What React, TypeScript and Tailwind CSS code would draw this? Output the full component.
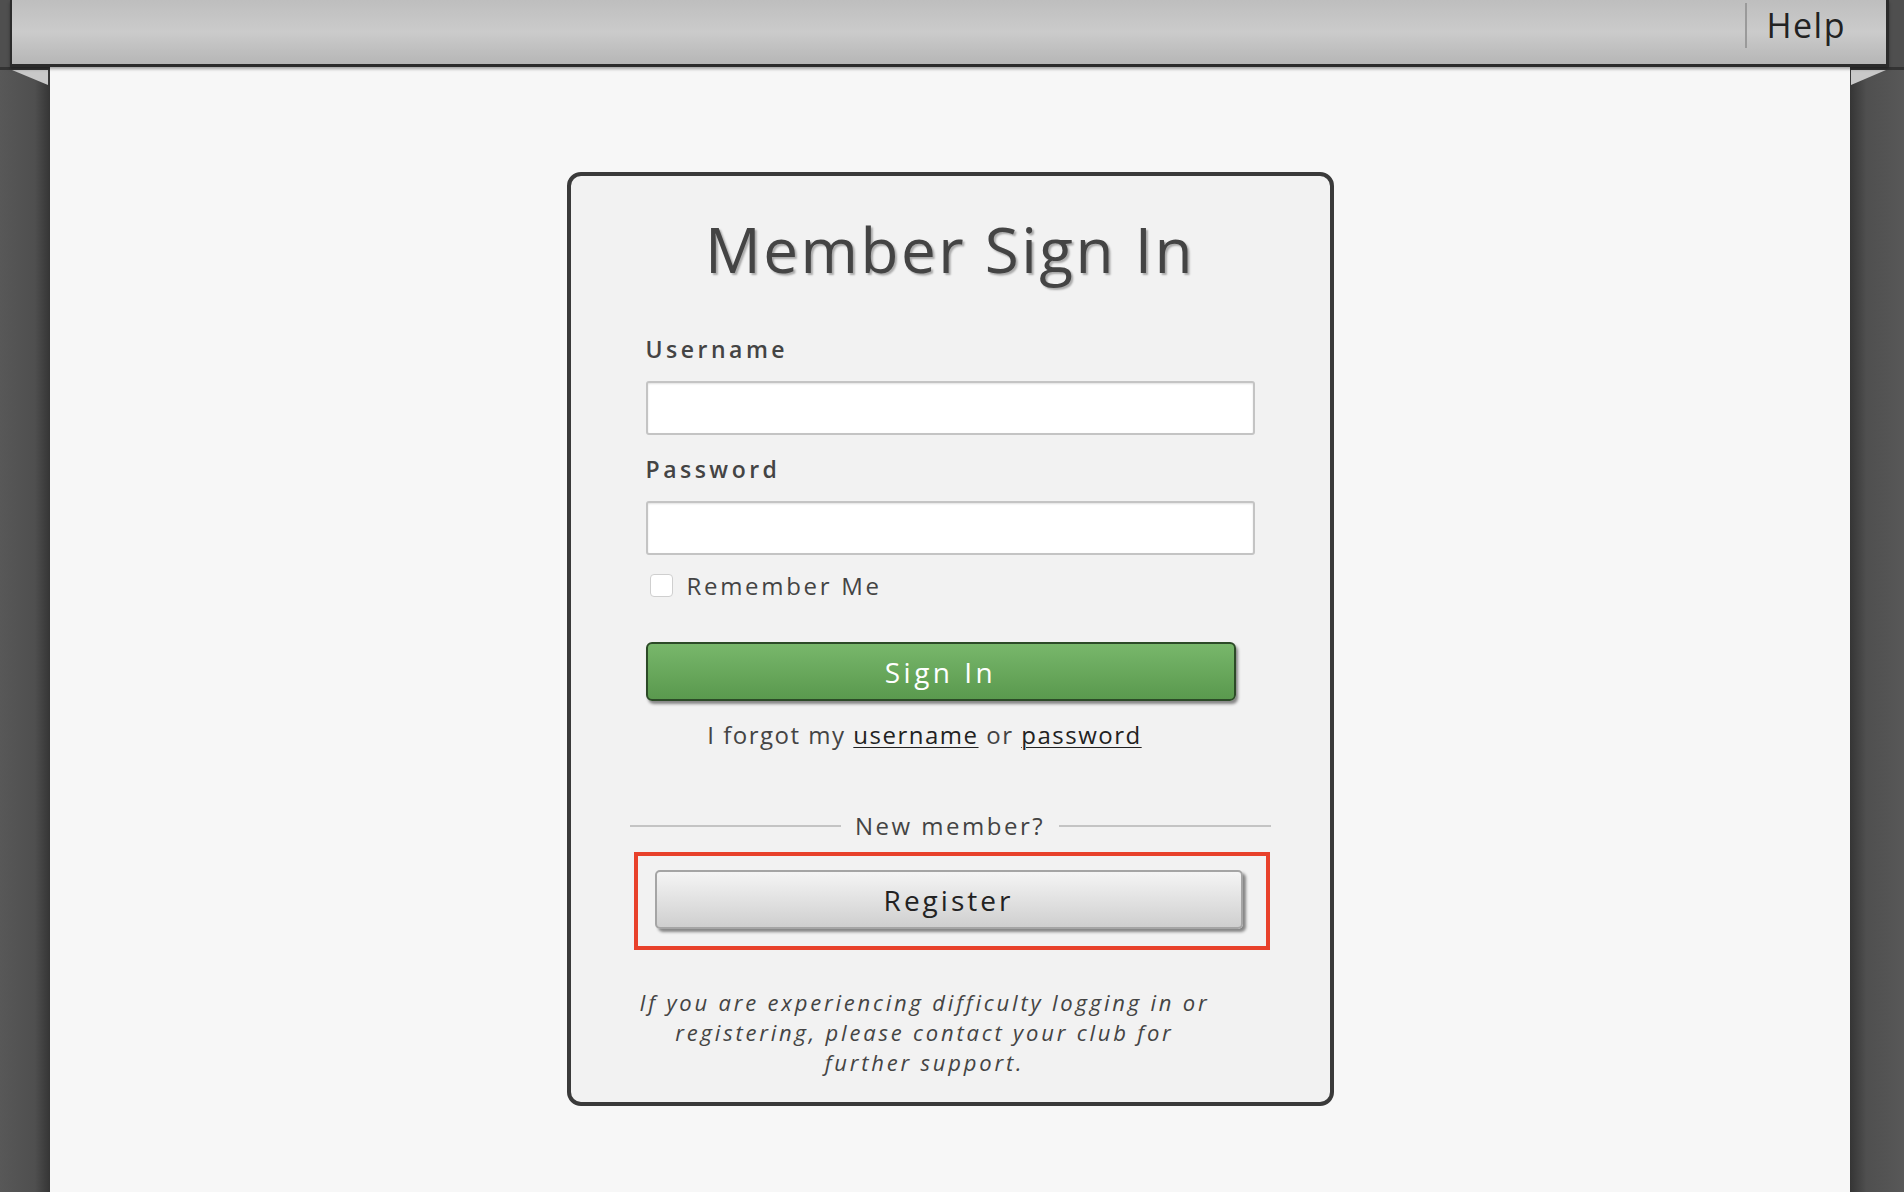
export default function App() {
  return (
    <div className="w-[1904px] h-[1192px] overflow-hidden flex flex-col bg-[#4f4f4f] font-['Open_Sans',sans-serif]">
      {/* Top bar */}
      <header className="relative z-10 ml-[10px] w-[1879px] h-[67px] shrink-0 flex justify-end items-start border-l-2 border-r-[3px] border-b-[3px] border-[#2b2b2b] bg-linear-to-b from-[#bebebe] via-[#cbcbcb] to-[#b6b6b6] shadow-[0_2px_3px_rgba(0,0,0,0.35)]">
        <div className="mt-[3px] w-[2px] h-[45px] bg-[#9a9a9a]" />
        <a className="ml-[19px] mr-[40px] mt-[8px] text-[34px] leading-none text-[#222] tracking-[1.5px]">Help</a>
      </header>

      <div className="flex flex-1">
        {/* Left side */}
        <div className="w-[50px] shrink-0 bg-linear-to-r from-[#585858] via-[#4f4f4f] via-70% to-[#353535]">
          <svg width="50" height="20" viewBox="0 0 50 20" className="block">
            <rect x="0" y="0" width="50" height="3" fill="#333" />
            <polygon points="12,3 48,3 48,18" fill="#c8c8c8" />
          </svg>
        </div>

        {/* Main */}
        <main className="flex-1 bg-[#f7f7f7] flex justify-center items-start pt-[105px]">
          <div className="w-[767px] border-4 border-[#3a3a3a] rounded-[14px] bg-[#f2f2f2] px-[75px] pt-[42px] pb-[25px] flex flex-col">
            <h1 className="text-center text-[62px] leading-none tracking-[2.5px] text-[#444] [text-shadow:2px_2px_2px_rgba(0,0,0,0.3)]">
              Member Sign In
            </h1>

            <label className="mt-[58px] text-[23px] leading-none font-semibold tracking-[3.5px] text-[#444]">
              Username
            </label>
            <input
              type="text"
              className="mt-[20px] w-full h-[54px] bg-white border-2 border-[#c4c4c4] rounded-[3px] shadow-[inset_0_1px_2px_rgba(0,0,0,0.12)] outline-none"
            />

            <label className="mt-[23px] text-[23px] leading-none font-semibold tracking-[3.5px] text-[#444]">
              Password
            </label>
            <input
              type="password"
              className="mt-[20px] w-full h-[54px] bg-white border-2 border-[#c4c4c4] rounded-[3px] shadow-[inset_0_1px_2px_rgba(0,0,0,0.12)] outline-none"
            />

            <label className="mt-[19px] flex items-center h-[23px] ml-[4px]">
              <input
                type="checkbox"
                className="appearance-none w-[23px] h-[23px] bg-white border border-[#cfcfcf] rounded-[4px]"
              />
              <span className="ml-[14px] text-[24px] leading-none tracking-[2.7px] text-[#444]">Remember Me</span>
            </label>

            <button className="mt-[45px] w-[590px] h-[59px] rounded-[6px] border-2 border-[#2c4a27] bg-linear-to-b from-[#78b76b] to-[#5a994e] shadow-[2px_3px_3px_rgba(0,0,0,0.45)] text-white text-[28px] leading-none font-medium tracking-[3.5px]">
              Sign In
            </button>

            <p className="mt-[22px] w-[558px] text-center text-[24px] leading-none tracking-[1.5px] text-[#444]">
              I forgot my <a className="underline underline-offset-[3px] decoration-1 text-[#222]">username</a> or{' '}
              <a className="underline underline-offset-[3px] decoration-1 text-[#222]">password</a>
            </p>

            {/* Divider */}
            <div className="mt-[67px] mx-[-16px] flex items-center h-[24px]">
              <div className="flex-1 h-[2px] bg-[#c4c4c4]" />
              <span className="mx-[14px] text-[24px] leading-none tracking-[2.5px] text-[#444]">New member?</span>
              <div className="flex-1 h-[2px] bg-[#c4c4c4]" />
            </div>

            {/* Highlight box */}
            <div className="mt-[14px] ml-[-12px] w-[636px] h-[98px] border-4 border-[#e8412b] pt-[14px] pl-[17px]">
              <button className="w-[588px] h-[59px] rounded-[5px] border-2 border-[#a5a5a5] bg-linear-to-b from-[#f5f5f5] to-[#cfcfcf] shadow-[3px_3px_3px_rgba(0,0,0,0.45)] text-[#222] text-[28px] leading-none font-medium tracking-[3px]">
                Register
              </button>
            </div>

            <p className="mt-[37px] ml-[-11px] w-[580px] text-center italic text-[22px] leading-[30px] tracking-[2.8px] text-[#444]">
              If you are experiencing difficulty logging in or
              <br />
              registering, please contact your club for
              <br />
              further support.
            </p>
          </div>
        </main>

        {/* Right side */}
        <div className="w-[54px] shrink-0 bg-linear-to-l from-[#585858] via-[#4f4f4f] via-70% to-[#353535]">
          <svg width="54" height="20" viewBox="0 0 54 20" className="block">
            <rect x="0" y="0" width="54" height="3" fill="#333" />
            <polygon points="1,3 36,3 1,18" fill="#c8c8c8" />
          </svg>
        </div>
      </div>
    </div>
  );
}
